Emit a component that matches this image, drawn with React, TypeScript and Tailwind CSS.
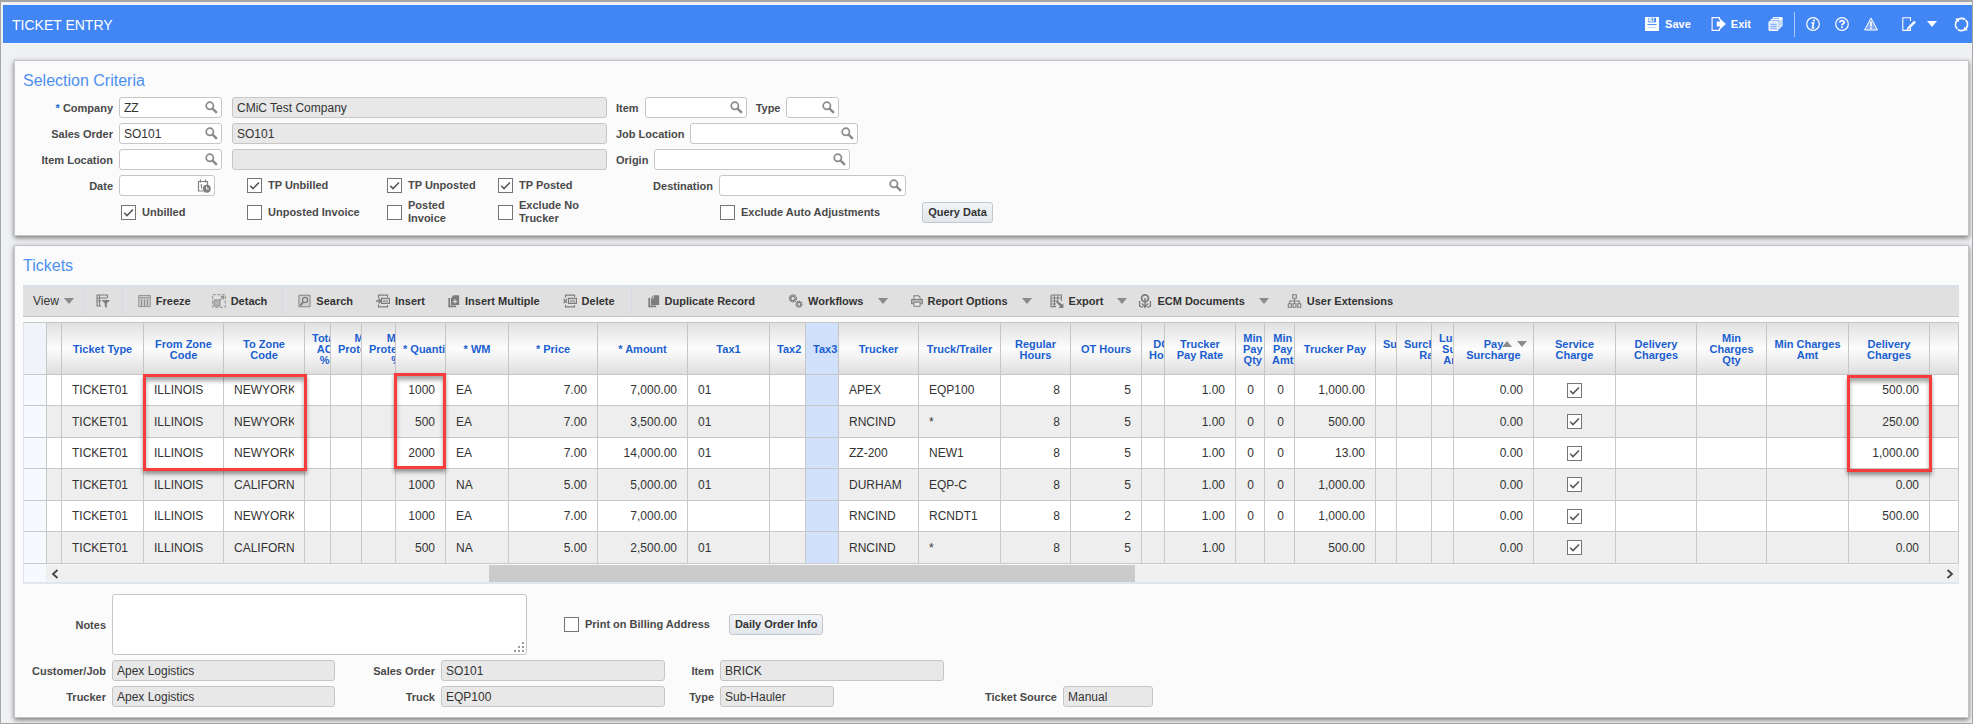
import { useState } from "react";
import type { ReactNode } from "react";
import clsx from "clsx";

type Align = "left" | "right" | "center";

interface Column {
  key: string;
  lines: string[];
  width: string;
  align?: Align;
  // narrow columns cut their heading off instead of centring it
  clip?: boolean;
  sortable?: boolean;
  selected?: boolean;
}

const COLUMNS: Column[] = [
  { key: "handle", lines: [], width: "w-[23px]" },
  { key: "status", lines: [], width: "w-[15px]" },
  { key: "ticketType", lines: ["Ticket Type"], width: "w-[82px]" },
  { key: "fromZone", lines: ["From Zone", "Code"], width: "w-[80px]" },
  { key: "toZone", lines: ["To Zone", "Code"], width: "w-[81px]" },
  { key: "totalAc", lines: ["Total", "AC", "%"], width: "w-[26px]", clip: true },
  { key: "maxProt", lines: ["Max", "Protection", "\u00a0"], width: "w-[31px]", clip: true },
  { key: "minProt", lines: ["Min", "Protection", "%"], width: "w-[34px]", clip: true },
  { key: "quantity", lines: ["* Quantity"], width: "w-[50px]", align: "right", clip: true },
  { key: "wm", lines: ["* WM"], width: "w-[63px]" },
  { key: "price", lines: ["* Price"], width: "w-[89px]", align: "right" },
  { key: "amount", lines: ["* Amount"], width: "w-[90px]", align: "right" },
  { key: "tax1", lines: ["Tax1"], width: "w-[82px]" },
  { key: "tax2", lines: ["Tax2"], width: "w-[36px]", clip: true },
  { key: "tax3", lines: ["Tax3"], width: "w-[33px]", clip: true, selected: true },
  { key: "trucker", lines: ["Trucker"], width: "w-[80px]" },
  { key: "truck", lines: ["Truck/Trailer"], width: "w-[82px]" },
  { key: "regHours", lines: ["Regular", "Hours"], width: "w-[70px]", align: "right" },
  { key: "otHours", lines: ["OT Hours"], width: "w-[71px]", align: "right" },
  { key: "dotHours", lines: ["DOT", "Hours"], width: "w-[23px]", clip: true },
  { key: "payRate", lines: ["Trucker", "Pay Rate"], width: "w-[71px]", align: "right" },
  { key: "minQty", lines: ["Min", "Pay", "Qty"], width: "w-[29px]", align: "right", clip: true },
  { key: "minAmt", lines: ["Min", "Pay", "Amt"], width: "w-[30px]", align: "right", clip: true },
  { key: "truckerPay", lines: ["Trucker Pay"], width: "w-[81px]", align: "right" },
  { key: "surAmt", lines: ["Surcharge", "Amt"], width: "w-[21px]", clip: true },
  { key: "surRate", lines: ["Surcharge", "Rate"], width: "w-[35px]", clip: true },
  { key: "lumpSum", lines: ["Lump", "Sum", "Amt"], width: "w-[22px]", clip: true },
  { key: "paySurcharge", lines: ["Pay", "Surcharge"], width: "w-[80px]", align: "right", sortable: true },
  { key: "service", lines: ["Service", "Charge"], width: "w-[82px]", align: "center" },
  { key: "delivery1", lines: ["Delivery", "Charges"], width: "w-[81px]" },
  { key: "minChargeQty", lines: ["Min", "Charges", "Qty"], width: "w-[70px]" },
  { key: "minChargeAmt", lines: ["Min Charges", "Amt"], width: "w-[82px]" },
  { key: "delivery2", lines: ["Delivery", "Charges"], width: "w-[81px]", align: "right" },
  { key: "rest", lines: [], width: "w-auto" },
];

type Ticket = Record<string, string>;

const base = { ticketType: "TICKET01", fromZone: "ILLINOIS", regHours: "8", payRate: "1.00", paySurcharge: "0.00" };

const TICKETS: Ticket[] = [
  { ...base, toZone: "NEWYORK", quantity: "1000", wm: "EA", price: "7.00", amount: "7,000.00", tax1: "01", trucker: "APEX", truck: "EQP100", otHours: "5", minQty: "0", minAmt: "0", truckerPay: "1,000.00", delivery2: "500.00" },
  { ...base, toZone: "NEWYORK", quantity: "500", wm: "EA", price: "7.00", amount: "3,500.00", tax1: "01", trucker: "RNCIND", truck: "*", otHours: "5", minQty: "0", minAmt: "0", truckerPay: "500.00", delivery2: "250.00" },
  { ...base, toZone: "NEWYORK", quantity: "2000", wm: "EA", price: "7.00", amount: "14,000.00", tax1: "01", trucker: "ZZ-200", truck: "NEW1", otHours: "5", minQty: "0", minAmt: "0", truckerPay: "13.00", delivery2: "1,000.00" },
  { ...base, toZone: "CALIFORN", quantity: "1000", wm: "NA", price: "5.00", amount: "5,000.00", tax1: "01", trucker: "DURHAM", truck: "EQP-C", otHours: "5", minQty: "0", minAmt: "0", truckerPay: "1,000.00", delivery2: "0.00" },
  { ...base, toZone: "NEWYORK", quantity: "1000", wm: "EA", price: "7.00", amount: "7,000.00", trucker: "RNCIND", truck: "RCNDT1", otHours: "2", minQty: "0", minAmt: "0", truckerPay: "1,000.00", delivery2: "500.00" },
  { ...base, toZone: "CALIFORN", quantity: "500", wm: "NA", price: "5.00", amount: "2,500.00", tax1: "01", trucker: "RNCIND", truck: "*", otHours: "5", truckerPay: "500.00", delivery2: "0.00" },
];

/* ---------- icons ---------- */

function Icon({ children, className = "size-3.5" }: { children: ReactNode; className?: string }) {
  return (
    <svg viewBox="0 0 14 14" className={clsx("shrink-0", className)} fill="none" stroke="currentColor" aria-hidden="true">
      {children}
    </svg>
  );
}

const SearchIcon = () => (
  <Icon className="size-[13px] text-[#8b8b8b]">
    <circle cx="5.2" cy="5.2" r="3.9" strokeWidth="1.9" />
    <path d="M8.2 8.2 12.8 12.8" strokeWidth="2.6" />
  </Icon>
);

const CalendarIcon = () => (
  <Icon className="size-3.5 text-[#808080]">
    <path d="M6 12H1.5V2.5h9V6M3.5 .5v3M8.5 .5v3" strokeWidth="1.2" />
    <path d="M3.4 6.2 4.6 5.4V9.6" strokeWidth="1" />
    <circle cx="9.8" cy="9.8" r="4" fill="currentColor" stroke="none" />
    <path d="M9.6 7.6V10h2.2" stroke="#fff" strokeWidth="1" />
  </Icon>
);

const CaretIcon = ({ className }: { className?: string }) => (
  <svg viewBox="0 0 10 6" className={clsx("h-1.5 w-2.5 shrink-0", className)} fill="currentColor" aria-hidden="true">
    <path d="M0 0h10L5 6z" />
  </svg>
);

const SaveIcon = () => (
  <Icon>
    <path d="M0 0h14v14H0z" fill="currentColor" stroke="none" />
    <path d="M3 .8h8v4.6H3z" fill="#4285f4" stroke="none" />
    <path d="M3.4 .8h5.8v3.9H3.4z" fill="#dbe8fe" stroke="none" />
    <path d="M6.6 1.4h1.6v2H6.6z" fill="#4285f4" stroke="none" />
    <path d="M2.5 7.6h9" stroke="#4285f4" strokeWidth="1" />
    <path d="M2.5 10.6h9" stroke="#a9c8fb" strokeWidth=".8" />
  </Icon>
);

const ExitIcon = () => (
  <Icon className="h-3.5 w-[15px]">
    <path d="M8 3V.6H.6v12.8H8V11" strokeWidth="1.1" />
    <path d="M5.2 4.6H8.4V1.4L14.4 7l-6 5.6V9.4H5.2z" fill="currentColor" stroke="none" />
  </Icon>
);

const WindowsIcon = () => (
  <Icon className="h-3.5 w-[15px]">
    <path d="M4.5 .6h9v8.6h-9z" fill="#8db4f9" strokeWidth="1" />
    <path d="M2.5 2.6h9v8.6h-9z" fill="#8db4f9" strokeWidth="1" />
    <path d="M.5 4.8h9v8.6h-9z" fill="#cfe0fd" strokeWidth="1" />
    <path d="M2 7.5h6M2 9.5h6M2 11.4h6" stroke="#7faaf8" strokeWidth=".8" />
    <path d="M10.6 .4h3.2v2.8h-3.2z" fill="currentColor" stroke="none" />
  </Icon>
);

const InfoIcon = () => (
  <Icon>
    <circle cx="7" cy="7" r="6.3" strokeWidth="1.2" />
    <path d="M5.4 6h2.2L6.4 10.7h2" strokeWidth="1.6" />
    <circle cx="7.9" cy="3.6" r="1.1" fill="currentColor" stroke="none" />
  </Icon>
);

const HelpIcon = () => (
  <Icon>
    <circle cx="7" cy="7" r="6.3" strokeWidth="1.2" />
    <path d="M4.9 5.4C4.9 3 9.2 3 9.2 5.3 9.2 6.8 7 6.7 7 8.5" strokeWidth="1.8" />
    <path d="M6.1 9.4h1.8v1.7H6.1z" fill="currentColor" stroke="none" />
  </Icon>
);

const WarningIcon = () => (
  <Icon>
    <path d="M7 1 13.4 13H.6z" fill="#7faaf8" strokeWidth="1" />
    <path d="M7 4.6v5M7 10.4V12" strokeWidth="1.6" />
  </Icon>
);

const EditIcon = () => (
  <Icon>
    <path d="M8.5 4V.8H.8v12.6h7.7V11" strokeWidth="1.1" />
    <path d="M6.4 11.2 13 4.6" strokeWidth="2.4" />
    <path d="M4.6 13l.8-2.8 2 2z" fill="currentColor" stroke="none" />
  </Icon>
);

const RefreshIcon = () => (
  <Icon className="size-[15px]">
    <path d="M3 11A5.7 5.7 0 0 1 10.4 2.4" strokeWidth="1.7" />
    <path d="M11 3A5.7 5.7 0 0 1 3.6 11.6" strokeWidth="1.7" />
    <path d="M1 1.4h3.6v3.4zM13 12.6H9.4V9.2z" fill="currentColor" stroke="none" />
  </Icon>
);

const FilterIcon = () => (
  <Icon>
    <path d="M11.5 4V1H1v11h4M1 4h10M3.5 1v11M1 7h4" strokeWidth="1.1" />
    <path d="M5.5 6H14l-3.2 3.4V14L8.8 12.6V9.4z" fill="currentColor" stroke="none" />
  </Icon>
);

const FreezeIcon = () => (
  <Icon className="h-3.5 w-[13px] text-[#8f8f8f]">
    <path d="M.8 1h12.4v12H.8z" fill="#cccccc" strokeWidth="1" />
    <path d="M1 3.5h12M3.8 5v7M7 5v7M10.2 5v7" strokeWidth="1.2" />
  </Icon>
);

const DetachIcon = () => (
  <Icon className="size-3.5 text-[#8f8f8f]">
    <path d="M.7.7h12.6v12.6H.7z" strokeWidth="1" strokeDasharray="3 1.6" />
    <path d="M2 6h6v6H2z" fill="#b5b5b5" strokeWidth="1" />
    <path d="M8 6 11.4 2.6M8.6 2.4h3v3" strokeWidth="1.1" />
  </Icon>
);

const SearchPageIcon = () => (
  <Icon className="h-3.5 w-[13px]">
    <path d="M1 .8h12v12.4H1z" fill="#d0d0d0" strokeWidth="1" />
    <circle cx="7.6" cy="5.8" r="2.8" strokeWidth="1.3" />
    <path d="M5.6 8 2.4 12" strokeWidth="1.8" />
  </Icon>
);

const InsertIcon = () => (
  <Icon>
    <path d="M2.5 4V1.2h9V3M2.5 10.5v2.3h9V11" strokeWidth="1.2" />
    <path d="M5.5 4.4h8v5h-8z" fill="#d6d6d6" strokeWidth="1.1" />
    <path d="M0 6.9h4.4M2.6 4.6 5 6.9 2.6 9.2" strokeWidth="1.5" />
    <path d="M7 7h5" strokeWidth="1" />
  </Icon>
);

const DeleteIcon = () => (
  <Icon>
    <path d="M2.5 3.4V1.2h9V3M2.5 10.8v2h9V11" strokeWidth="1.2" />
    <path d="M5.5 4.4h8v5h-8z" fill="#d6d6d6" strokeWidth="1.1" />
    <path d="M.6 5 4 9M4 5 .6 9" strokeWidth="1.2" />
    <path d="M7 7h5" strokeWidth="1" />
  </Icon>
);

const PagesIcon = ({ plus }: { plus?: boolean }) => (
  <Icon className="h-3.5 w-3">
    <path d="M1.4 3.4V13.2h8" strokeWidth="2" />
    <path d="M6.4.4H13v11.4H3.4V3.6z" fill="currentColor" stroke="none" />
    {plus && <path d="M8.2 5v5M5.7 7.5h5" stroke="#e0e0e0" strokeWidth="1.2" />}
    {!plus && <path d="M3.6 3.8h3V.8" stroke="#e0e0e0" strokeWidth=".7" />}
  </Icon>
);

const GearsIcon = () => (
  <Icon className="h-3.5 w-[15px]">
    <circle cx="4.4" cy="4.4" r="3.5" strokeWidth="1.4" strokeDasharray="1.5 .7" />
    <circle cx="4.4" cy="4.4" r="2.2" strokeWidth="1.3" />
    <circle cx="10.4" cy="10.2" r="2.9" strokeWidth="1.4" strokeDasharray="1.3 .6" />
    <circle cx="10.4" cy="10.2" r="1.8" strokeWidth="1.2" />
  </Icon>
);

const PrinterIcon = () => (
  <Icon className="h-3.5 w-3">
    <path d="M3.4 5V1h5.4l1.8 1.8V5" strokeWidth="1.2" />
    <path d="M.8 5.2h12.4v5H.8z" fill="#b8b8b8" strokeWidth="1.2" />
    <path d="M3.4 8.4h7.2v4.8H3.4z" fill="#e6e6e6" strokeWidth="1.1" />
  </Icon>
);

const ExportIcon = () => (
  <Icon>
    <path d="M1 1h10.4v6M1 1v11.6h5M1 4h10.4M4.4 1v11.6M7.8 1v6.4M1 7h7M1 10h5" strokeWidth="1.1" />
    <path d="M7 6.6l5 4 1.4-1.4V14H8.6l1.6-1.4-4-4.4z" fill="currentColor" stroke="none" />
  </Icon>
);

const EcmIcon = () => (
  <Icon>
    <circle cx="7" cy="4.2" r="3.4" strokeWidth="1.8" />
    <path d="M7 4v9.6M4 9.4l3 4 3-4" strokeWidth="1.4" />
    <path d="M1.6 7v5l3 1.4M12.4 7v5l-3 1.4" strokeWidth="1.3" />
  </Icon>
);

const TreeIcon = () => (
  <Icon className="h-3.5 w-[15px]">
    <path d="M5.2.8h3.6v3.4H5.2zM.8 9.8h3v3.4h-3zM5.5 9.8h3v3.4h-3zM10.2 9.8h3v3.4h-3z" strokeWidth="1.1" />
    <path d="M7 4.2v5.6M2.3 9.8V7h9.4v2.8" strokeWidth="1.1" />
  </Icon>
);

/* ---------- form parts ---------- */

interface FieldProps {
  id: string;
  label: string;
  value?: string;
  labelClass?: string;
  width: string;
  icon?: "search" | "calendar";
  readOnly?: boolean;
  required?: boolean;
}

function Field({ id, label, value = "", labelClass, width, icon, readOnly, required }: FieldProps) {
  return (
    <div className="flex items-center gap-1.5">
      <label htmlFor={id} className={clsx("shrink-0 whitespace-nowrap pt-0.5 text-right", labelClass)}>
        {required && <span className="text-[#1b6ac9]">* </span>}
        {label}
      </label>
      <TextBox id={id} value={value} width={width} icon={icon} readOnly={readOnly} />
    </div>
  );
}

interface TextBoxProps {
  id?: string;
  label?: string;
  value?: string;
  width: string;
  icon?: "search" | "calendar";
  readOnly?: boolean;
}

function TextBox({ id, label, value, width, icon, readOnly }: TextBoxProps) {
  return (
    <div
      className={clsx(
        "flex h-[21px] items-center rounded-[3px] border border-[#c6c6c6] pr-[3px]",
        readOnly ? "bg-[#e8e8e8]" : "bg-white",
        width
      )}
    >
      <input
        id={id}
        aria-label={label}
        defaultValue={value}
        readOnly={readOnly}
        className="h-full w-full min-w-0 bg-transparent pl-1 text-xs font-normal text-[#333] outline-none"
      />
      {icon && (
        <button type="button" aria-label={icon === "search" ? "Search" : "Pick date"} className="shrink-0">
          {icon === "search" ? <SearchIcon /> : <CalendarIcon />}
        </button>
      )}
    </div>
  );
}

function CheckBox({ checked = false, label, hiddenLabel }: { checked?: boolean; label?: ReactNode; hiddenLabel?: string }) {
  const [on, setOn] = useState(checked);
  return (
    <label className="inline-flex items-center gap-1.5">
      <span className="relative block size-[15px] shrink-0">
        <input
          type="checkbox"
          checked={on}
          onChange={() => setOn(!on)}
          aria-label={hiddenLabel}
          className="block size-[15px] appearance-none border border-[#757575] bg-white"
        />
        {on && (
          <svg viewBox="0 0 15 15" className="pointer-events-none absolute inset-0" fill="none" stroke="#555" strokeWidth="1.5" aria-hidden="true">
            <path d="M3.2 7.8 6 10.6 12 4.4" />
          </svg>
        )}
      </span>
      {label && <span>{label}</span>}
    </label>
  );
}

function PushButton({ children }: { children: ReactNode }) {
  return (
    <button
      type="button"
      className="h-[21px] whitespace-nowrap rounded-[3px] border border-[#c3c6ca] bg-gradient-to-b from-[#f1f4f7] to-[#e2e7ec] px-[5px] text-[11px] font-bold text-[#333]"
    >
      {children}
    </button>
  );
}

function Panel({ title, className, children }: { title: string; className?: string; children: ReactNode }) {
  return (
    <section
      className={clsx(
        "border border-[#c4c4c4] bg-[#fbfbfb] pl-2 pr-[9px] pt-2.5 shadow-[0_2px_5px_rgba(0,0,0,0.5)]",
        className
      )}
    >
      <h2 className="text-base leading-5 text-[#4d90f0]">{title}</h2>
      {children}
    </section>
  );
}

/* ---------- page header ---------- */

function HeaderBar() {
  return (
    <header className="flex h-[38px] items-center justify-between bg-[#4285f4] pl-[9px] pr-[3px] text-white">
      <h1 className="pt-0.5 text-sm">TICKET ENTRY</h1>
      <div className="flex items-center text-[11px] font-bold">
        <button type="button" className="mr-5 flex items-center gap-1.5">
          <SaveIcon />
          Save
        </button>
        <button type="button" className="mr-[17px] flex items-center gap-[5px]">
          <ExitIcon />
          Exit
        </button>
        <button type="button" aria-label="Windows">
          <WindowsIcon />
        </button>
        <span className="mx-[11px] h-[25px] w-px bg-[#a9c8fb]" />
        <div className="flex items-center gap-[15px]">
          <button type="button" aria-label="Information"><InfoIcon /></button>
          <button type="button" aria-label="Help"><HelpIcon /></button>
          <button type="button" aria-label="Warnings"><WarningIcon /></button>
        </div>
        <button type="button" aria-label="Edit" className="ml-6 flex items-center gap-[11px]">
          <EditIcon />
          <CaretIcon />
        </button>
        <button type="button" aria-label="Refresh" className="ml-[17px]"><RefreshIcon /></button>
      </div>
    </header>
  );
}

/* ---------- selection criteria ---------- */

function SelectionCriteria() {
  return (
    <Panel title="Selection Criteria" className="h-[176px]">
      <div className="mt-1.5 flex gap-[9px]">
        <div className="flex flex-col gap-[5px]">
          <div className="flex gap-2.5">
            <Field id="company" label="Company" required value="ZZ" labelClass="w-[90px]" width="w-[103px]" icon="search" />
            <TextBox label="Company name" value="CMiC Test Company" width="w-[375px]" readOnly />
          </div>
          <div className="flex gap-2.5">
            <Field id="salesOrder" label="Sales Order" value="SO101" labelClass="w-[90px]" width="w-[103px]" icon="search" />
            <TextBox label="Sales order name" value="SO101" width="w-[375px]" readOnly />
          </div>
          <div className="flex gap-2.5">
            <Field id="itemLocation" label="Item Location" labelClass="w-[90px]" width="w-[103px]" icon="search" />
            <TextBox label="Item location name" width="w-[375px]" readOnly />
          </div>
          <div className="flex">
            <div className="w-[224px]">
              <Field id="date" label="Date" labelClass="w-[90px]" width="w-24" icon="calendar" />
            </div>
            <div className="flex w-[140px] items-center"><CheckBox checked label="TP Unbilled" /></div>
            <div className="flex w-[111px] items-center"><CheckBox checked label="TP Unposted" /></div>
            <div className="flex items-center"><CheckBox checked label="TP Posted" /></div>
          </div>
          <div className="-mt-0.5 flex leading-[13px]">
            <div className="flex w-[224px] items-center pl-[98px]"><CheckBox checked label="Unbilled" /></div>
            <div className="flex w-[140px] items-center"><CheckBox label="Unposted Invoice" /></div>
            <div className="flex w-[111px] items-center"><CheckBox label={<>Posted<br />Invoice</>} /></div>
            <div className="flex items-center"><CheckBox label={<>Exclude No<br />Trucker</>} /></div>
          </div>
        </div>

        <div className="flex flex-col gap-[5px]">
          <div className="flex gap-[9px]">
            <Field id="item" label="Item" width="w-[102px]" icon="search" />
            <Field id="type" label="Type" width="w-[53px]" icon="search" />
          </div>
          <Field id="jobLocation" label="Job Location" width="w-[168px]" icon="search" />
          <Field id="origin" label="Origin" width="w-[196px]" icon="search" />
          <Field id="destination" label="Destination" labelClass="w-[97px]" width="w-[187px]" icon="search" />
          <div className="flex items-center gap-[42px] pl-[104px] pt-px">
            <CheckBox label="Exclude Auto Adjustments" />
            <PushButton>Query Data</PushButton>
          </div>
        </div>
      </div>
    </Panel>
  );
}

/* ---------- tickets ---------- */

function ToolButton({ icon, label, menu }: { icon: ReactNode; label: string; menu?: boolean }) {
  return (
    <button type="button" className="flex items-center gap-[5px] whitespace-nowrap">
      <span className="text-[#7d7d7d]">{icon}</span>
      {label}
      {menu && <CaretIcon className="ml-[9px] text-[#8a8a8a]" />}
    </button>
  );
}

function Toolbar() {
  return (
    <div className="flex h-8 items-stretch border-b border-t border-b-[#c4c4c4] border-t-[#d3e1f2] bg-[#e0e0e0] text-[11px] font-bold text-[#333]">
      <div className="flex items-center border-r border-[#d3dce6] pl-2.5 pr-[9px]">
        <button type="button" className="flex items-center gap-[5px] text-xs font-normal">
          View <CaretIcon className="text-[#8a8a8a]" />
        </button>
      </div>
      <div className="flex items-center border-r border-[#d3dce6] px-3 text-[#7d7d7d]">
        <button type="button" aria-label="Query by example"><FilterIcon /></button>
      </div>
      <div className="flex items-center gap-[21px] border-r border-[#d3dce6] px-[15px]">
        <ToolButton icon={<FreezeIcon />} label="Freeze" />
        <ToolButton icon={<DetachIcon />} label="Detach" />
      </div>
      <div className="flex items-center gap-[23px] border-r border-[#d3dce6] pl-[15px] pr-4">
        <ToolButton icon={<SearchPageIcon />} label="Search" />
        <ToolButton icon={<InsertIcon />} label="Insert" />
        <ToolButton icon={<PagesIcon plus />} label="Insert Multiple" />
        <ToolButton icon={<DeleteIcon />} label="Delete" />
      </div>
      <div className="flex items-center gap-[33px] pl-4">
        <ToolButton icon={<PagesIcon />} label="Duplicate Record" />
        <div className="flex items-center gap-[18px]">
          <div className="flex items-center gap-[23px]">
            <ToolButton icon={<GearsIcon />} label="Workflows" menu />
            <ToolButton icon={<PrinterIcon />} label="Report Options" menu />
          </div>
          <div className="flex items-center gap-[11px]">
            <ToolButton icon={<ExportIcon />} label="Export" menu />
            <ToolButton icon={<EcmIcon />} label="ECM Documents" menu />
          </div>
          <ToolButton icon={<TreeIcon />} label="User Extensions" />
        </div>
      </div>
    </div>
  );
}

function HeadCell({ col }: { col: Column }) {
  return (
    <th
      scope="col"
      className={clsx(
        "relative h-[52px] overflow-hidden whitespace-nowrap border-b border-r border-[#c6c6c6] px-0 pb-0 pt-0.5 text-[11px] font-bold leading-[11px] text-[#1a5fd0]",
        col.key === "handle" && "bg-[#f0f3f9]",
        col.selected && "bg-[#d2e1fb]",
        col.clip ? "pl-[7px] text-left" : "text-center",
        col.key !== "handle" && !col.selected && "bg-gradient-to-b from-[#e0e0e0] via-[#fdfdfd] to-[#dedede]"
      )}
    >
      <span className="inline-block text-center align-middle">
        {col.lines.map((line) => (
          <span key={line} className="block">{line}</span>
        ))}
      </span>
      {col.sortable && (
        <span className="absolute right-1.5 top-[18px] flex gap-[5px] text-[#8c8c8c]">
          <CaretIcon className="rotate-180" />
          <CaretIcon />
        </span>
      )}
    </th>
  );
}

function TicketTable() {
  return (
    <div className="relative mt-[5px] border-l border-t border-l-[#dbe4ee] border-t-[#c6c6c6]">
      <table className="w-full table-fixed border-separate border-spacing-0">
        <colgroup>
          {COLUMNS.map((c) => (
            <col key={c.key} className={c.width} />
          ))}
        </colgroup>
        <thead>
          <tr>
            {COLUMNS.map((c) => (
              <HeadCell key={c.key} col={c} />
            ))}
          </tr>
        </thead>
        <tbody>
          {TICKETS.map((ticket, i) => (
            <tr key={i} className="odd:h-[31px] odd:bg-white even:h-8 even:bg-[#eeeeee]">
              {COLUMNS.map((c) => (
                <td
                  key={c.key}
                  className={clsx(
                    "overflow-hidden whitespace-nowrap border-b border-r border-[#c8c8c8] p-0 text-xs font-normal text-[#333]",
                    c.key === "handle" && "bg-[#f6f9fe]",
                    c.selected && "bg-[#d2e1fb]",
                    c.align === "right" && "text-right",
                    c.align === "center" && "text-center"
                  )}
                >
                  {c.key === "service" ? (
                    <span className="flex justify-center"><CheckBox checked hiddenLabel="Service Charge" /></span>
                  ) : (
                    <div className="mx-2.5 overflow-hidden">{ticket[c.key]}</div>
                  )}
                </td>
              ))}
            </tr>
          ))}
        </tbody>
      </table>

      {/* horizontal scroll bar */}
      <div className="flex h-5 items-stretch border-b-2 border-r border-[#e1e7ee] bg-[#f6f9fe] pl-[22px] pt-px text-[#444]">
        <div className="flex flex-1 items-center bg-[#f0f0f0]">
          <button type="button" aria-label="Scroll left" className="flex w-[17px] justify-center">
            <svg viewBox="0 0 8 10" className="h-2.5 w-2" fill="none" stroke="currentColor" strokeWidth="1.8" aria-hidden="true"><path d="M6.5 1 2 5l4.5 4" /></svg>
          </button>
          <div className="flex h-full flex-1">
            <div className="w-[22.7%]" />
            <div className="w-[34.4%] bg-[#cbcbcb]" />
          </div>
          <button type="button" aria-label="Scroll right" className="flex w-[17px] justify-center">
            <svg viewBox="0 0 8 10" className="h-2.5 w-2" fill="none" stroke="currentColor" strokeWidth="1.8" aria-hidden="true"><path d="M1.5 1 6 5 1.5 9" /></svg>
          </button>
        </div>
      </div>

      {/* call-outs over the zones, the quantities and the delivery charges */}
      <Callout className="left-[119px] top-[51px] h-[97px] w-[164px]" />
      <Callout className="left-[370px] top-[50px] h-[96px] w-[52px]" />
      <Callout className="left-[1823px] top-[52px] h-[97px] w-[85px]" />
    </div>
  );
}

function Callout({ className }: { className: string }) {
  return (
    <div
      className={clsx(
        "pointer-events-none absolute border-[3px] border-[#f83c3c] shadow-[0_3px_4px_rgba(0,0,0,0.4),inset_0_4px_4px_rgba(0,0,0,0.35)]",
        className
      )}
    />
  );
}

function TicketDetails() {
  return (
    <div className="mt-2.5 flex flex-col gap-[5px]">
      <div className="flex items-center">
        <label htmlFor="notes" className="w-[83px] pt-0.5 text-right">Notes</label>
        <div className="relative ml-1.5 mr-[37px] h-[61px] w-[415px]">
          <textarea
            id="notes"
            className="block h-full w-full resize-none rounded-[3px] border border-[#c6c6c6] bg-white p-1 text-xs font-normal outline-none"
          />
          <svg viewBox="0 0 10 10" className="pointer-events-none absolute bottom-[3px] right-[3px] size-2.5" fill="#9a9a9a" aria-hidden="true">
            <path d="M8 0h2v2H8zM8 4h2v2H8zM4 4h2v2H4zM8 8h2v2H8zM4 8h2v2H4zM0 8h2v2H0z" />
          </svg>
        </div>
        <div className="flex items-center gap-[19px]">
          <CheckBox label="Print on Billing Address" />
          <PushButton>Daily Order Info</PushButton>
        </div>
      </div>
      <div className="flex">
        <Field id="customer" label="Customer/Job" value="Apex Logistics" labelClass="w-[83px]" width="w-[223px]" readOnly />
        <Field id="order" label="Sales Order" value="SO101" labelClass="w-[100px]" width="w-[224px]" readOnly />
        <Field id="detailItem" label="Item" value="BRICK" labelClass="w-[49px]" width="w-[224px]" readOnly />
      </div>
      <div className="flex">
        <Field id="trucker" label="Trucker" value="Apex Logistics" labelClass="w-[83px]" width="w-[223px]" readOnly />
        <Field id="truck" label="Truck" value="EQP100" labelClass="w-[100px]" width="w-[224px]" readOnly />
        <Field id="detailType" label="Type" value="Sub-Hauler" labelClass="w-[49px]" width="w-[114px]" readOnly />
        <Field id="source" label="Ticket Source" value="Manual" labelClass="w-[223px]" width="w-[90px]" readOnly />
      </div>
    </div>
  );
}

export default function App() {
  return (
    <div className="min-h-screen overflow-hidden border border-t-2 border-[#a6a6a6] bg-[#eff1f4] font-['Liberation_Sans',Arial,sans-serif] text-[11px] font-bold text-[#4a4a4a] [&_h1]:font-normal [&_h2]:font-normal">
      <div className="pl-0.5 pt-[3px]">
        <HeaderBar />
        <main className="flex flex-col gap-[9px] border-t border-[#fafafa] pb-1 pl-[11px] pr-[3px] pt-4">
          <SelectionCriteria />
          <Panel title="Tickets" className="pb-2.5">
            <div className="mt-[9px]">
              <Toolbar />
            </div>
            <TicketTable />
            <TicketDetails />
          </Panel>
        </main>
      </div>
    </div>
  );
}
